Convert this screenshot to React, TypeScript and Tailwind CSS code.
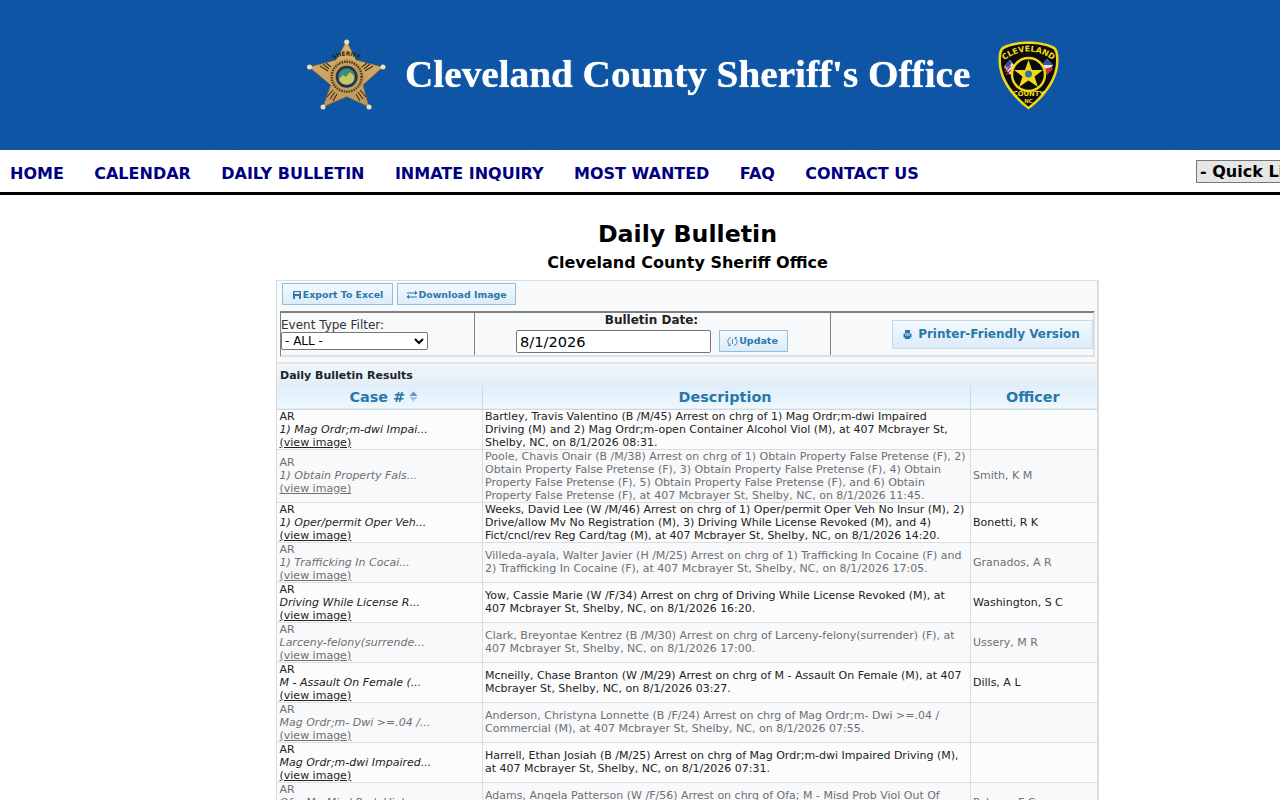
import React from "react";

const F = { fontFamily: '"DejaVu Sans", sans-serif' };

type Row = { c: string; d: React.ReactNode; o: string; alt?: boolean };
const rows: Row[] = [
  { c: "1) Mag Ordr;m-dwi Impai...", d: "Bartley, Travis Valentino (B /M/45) Arrest on chrg of 1) Mag Ordr;m-dwi Impaired Driving (M) and 2) Mag Ordr;m-open Container Alcohol Viol (M), at 407 Mcbrayer St, Shelby, NC, on 8/1/2026 08:31.", o: "" },
  { c: "1) Obtain Property Fals...", d: "Poole, Chavis Onair (B /M/38) Arrest on chrg of 1) Obtain Property False Pretense (F), 2) Obtain Property False Pretense (F), 3) Obtain Property False Pretense (F), 4) Obtain Property False Pretense (F), 5) Obtain Property False Pretense (F), and 6) Obtain Property False Pretense (F), at 407 Mcbrayer St, Shelby, NC, on 8/1/2026 11:45.", o: "Smith, K M", alt: true },
  { c: "1) Oper/permit Oper Veh...", d: "Weeks, David Lee (W /M/46) Arrest on chrg of 1) Oper/permit Oper Veh No Insur (M), 2) Drive/allow Mv No Registration (M), 3) Driving While License Revoked (M), and 4) Fict/cncl/rev Reg Card/tag (M), at 407 Mcbrayer St, Shelby, NC, on 8/1/2026 14:20.", o: "Bonetti, R K" },
  { c: "1) Trafficking In Cocai...", d: "Villeda-ayala, Walter Javier (H /M/25) Arrest on chrg of 1) Trafficking In Cocaine (F) and 2) Trafficking In Cocaine (F), at 407 Mcbrayer St, Shelby, NC, on 8/1/2026 17:05.", o: "Granados, A R", alt: true },
  { c: "Driving While License R...", d: "Yow, Cassie Marie (W /F/34) Arrest on chrg of Driving While License Revoked (M), at 407 Mcbrayer St, Shelby, NC, on 8/1/2026 16:20.", o: "Washington, S C" },
  { c: "Larceny-felony(surrende...", d: "Clark, Breyontae Kentrez (B /M/30) Arrest on chrg of Larceny-felony(surrender) (F), at 407 Mcbrayer St, Shelby, NC, on 8/1/2026 17:00.", o: "Ussery, M R", alt: true },
  { c: "M - Assault On Female (...", d: "Mcneilly, Chase Branton (W /M/29) Arrest on chrg of M - Assault On Female (M), at 407 Mcbrayer St, Shelby, NC, on 8/1/2026 03:27.", o: "Dills, A L" },
  { c: "Mag Ordr;m- Dwi >=.04 /...", d: "Anderson, Christyna Lonnette (B /F/24) Arrest on chrg of Mag Ordr;m- Dwi >=.04 / Commercial (M), at 407 Mcbrayer St, Shelby, NC, on 8/1/2026 07:55.", o: "", alt: true },
  { c: "Mag Ordr;m-dwi Impaired...", d: "Harrell, Ethan Josiah (B /M/25) Arrest on chrg of Mag Ordr;m-dwi Impaired Driving (M), at 407 Mcbrayer St, Shelby, NC, on 8/1/2026 07:31.", o: "" },
  { c: "Ofa; M - Misd Prob Viol...", d: "Adams, Angela Patterson (W /F/56) Arrest on chrg of Ofa; M - Misd Prob Viol Out Of County (M), at 407 Mcbrayer St, Shelby, NC, on 8/1/2026 09:10.", o: "Palmer, F C", alt: true },
];

function Star() {
  return (
    <svg width="80" height="72" viewBox="0 0 80 72" className="shrink-0">
      <defs>
        <linearGradient id="gold" x1="0" y1="0" x2="0" y2="1">
          <stop offset="0" stopColor="#d9b56e" />
          <stop offset="1" stopColor="#c0975a" />
        </linearGradient>
      </defs>
      <polygon
        points="40.700,2 50,21 77,28 57,46 63,68 40.700,57.700 17,68 24.700,46 3,28 30,21"
        fill="url(#gold)"
        stroke="#7a5c30"
        strokeWidth="0.6"
      />
      {[[40.7, 3], [3.5, 28], [77, 28], [17, 68], [63, 68]].map(([x, y], i) => (
        <circle key={i} cx={x} cy={y} r="2.500" fill="#eee2bc" />
      ))}
      <path
        d="M14 27l8 5M17 25l6 5M20 24l5 4M67 27l-8 5M64 25l-6 5M61 24l-5 4M24 60l5-7M27 62l4-7M21 58l6-7M57 60l-5-7M54 62l-4-7M60 58l-6-7"
        stroke="#3a2b14"
        strokeWidth="1.100"
      />
      <circle cx="40.700" cy="37.700" r="18" fill="#c59e5c" />
      <circle cx="40.700" cy="37.700" r="15" fill="none" stroke="#4a3a1c" strokeWidth="2.400" strokeDasharray="1.500 1" />
      <circle cx="40.700" cy="37.700" r="11" fill="#27324e" />
      <circle cx="40.700" cy="37.700" r="8.500" fill="#3d8b7a" />
      <path d="M33 40l4-4 3 2 4-5 4 4v4a8.500 8.500 0 0 1-15 0z" fill="#c8c860" />
      <path id="sh-arc" d="M27 21Q40.700 12 54 21" fill="none" />
      <text fontSize="5.800" fontWeight="700" fill="#2c2010" fontFamily="DejaVu Sans">
        <textPath href="#sh-arc" startOffset="50%" textAnchor="middle">SHERIFF</textPath>
      </text>
    </svg>
  );
}

function Shield() {
  return (
    <svg width="61" height="69" viewBox="0 0 61 69" className="shrink-0">
      <path d="M30.500 .5C42 .5 52 3 57 6C60 9 60.500 13 60.500 20C60.500 40 45 58 30.500 68.500C16 58 .5 40 .5 20C.5 13 1 9 4 6C9 3 19 .5 30.500 .5z" fill="#f2d916" />
      <path d="M30.500 3C41 3 50 5 55 8C57.500 10 58 14 58 20C58 38 44 55 30.500 65.500C17 55 3 38 3 20C3 14 3.500 10 6 8C11 5 20 3 30.500 3z" fill="#0b0b0b" />
      <path id="cl-arc" d="M5 20Q30.500 1 56 20" fill="none" />
      <text fontSize="8" fontWeight="700" fill="#f2d916" fontFamily="DejaVu Sans">
        <textPath href="#cl-arc" startOffset="50%" textAnchor="middle">CLEVELAND</textPath>
      </text>
      <path d="M6 26l6-7 5 6-5 9z" fill="#e2e2ea" />
      <path d="M6.500 28l6-6M7 31l6-6M8 34l5-5" stroke="#c43030" strokeWidth="1.200" />
      <path d="M7 24l4-5 3 3-4 5z" fill="#33509a" />
      <path d="M55 24l-6-6-5 6 5 9z" fill="#e2e2ea" />
      <path d="M44 24l5-6 6 6z" fill="#33509a" />
      <path d="M46 28l8-2 1 2-6 6z" fill="#c83030" />
      <circle cx="30.500" cy="33.500" r="16.500" fill="#0b0b0b" stroke="#f2d916" strokeWidth="2.400" />
      <polygon points="30.500,19 34,29 45,29 36.500,35.500 40,46 30.500,39.500 21,46 24.500,35.500 16,29 27,29" fill="#f2d916" />
      <circle cx="30.500" cy="33" r="3.500" fill="#3a6ea8" />
      <text x="30.500" y="54.500" textAnchor="middle" fontSize="6.800" fontWeight="700" fill="#f2d916" fontFamily="DejaVu Sans">COUNTY</text>
      <text x="30.500" y="62" textAnchor="middle" fontSize="5.500" fontWeight="700" fill="#f2d916" fontFamily="DejaVu Sans">NC</text>
    </svg>
  );
}

function Btn({ icon, children, cls }: { icon: React.ReactNode; children: React.ReactNode; cls: string }) {
  return (
    <button
      style={F}
      className={`flex items-center justify-center bg-gradient-to-b from-[#f4f9fd] to-[#dcecf8] text-[#2779aa] font-bold ${cls}`}
    >
      {icon}
      {children}
    </button>
  );
}

export default function App() {
  return (
    <div className="w-[1280px] h-[800px] overflow-hidden bg-white" style={F}>
      <div className="w-[1375px]">
        <header className="relative h-[150px] bg-[#1161b0] flex items-center justify-center overflow-hidden">
          <svg className="absolute inset-0 opacity-30" width="1375" height="150">
            <filter id="n">
              <feTurbulence type="fractalNoise" baseFrequency="0.8" numOctaves="2" />
              <feColorMatrix type="matrix" values="0 0 0 0 0  0 0 0 0 0  0 0 0 0 0.1  0.8 0 0 0 0" />
            </filter>
            <rect width="1375" height="150" filter="url(#n)" />
          </svg>
          <div className="relative flex items-center pr-[10px]">
            <Star />
            <span
              className="inline-block ml-[35px] mr-[43px] text-white font-bold text-[37px] scale-x-[1.06] whitespace-nowrap [text-shadow:0_0_1px_#ffffff]"
              style={{ fontFamily: '"Liberation Serif", serif' }}
            >
              Cleveland County Sheriff's Office
            </span>
            <Shield />
          </div>
        </header>

        <nav className="relative h-[45px] border-b-[3px] border-black flex items-center pl-[10px] pt-[6px] gap-[30.400px] text-[#000080] font-bold text-[16px]">
          {["HOME", "CALENDAR", "DAILY BULLETIN", "INMATE INQUIRY", "MOST WANTED", "FAQ", "CONTACT US"].map((t) => (
            <a key={t} className="whitespace-nowrap">{t}</a>
          ))}
          <div className="absolute left-[1196px] top-[10px] h-[23px] w-[150px] border border-[#767676] bg-[#e6e6e6] text-black text-[16px] leading-[21px] pl-[3px] whitespace-nowrap">
            - Quick Links -
          </div>
        </nav>

        <main className="w-[823px] mx-auto pt-[25px] text-black">
          <h1 className="text-center text-[23.700px] font-bold leading-[29px]">Daily Bulletin</h1>
          <h2 className="text-center text-[16px] font-bold leading-[19px] mt-[4px]">Cleveland County Sheriff Office</h2>

          <section className="mt-[8px] border border-[#dcdcdc] border-r-2 bg-[#f8f9fb]">
            <div className="flex gap-[4px] pl-[5px] pt-[2px] h-[30px]">
              <Btn
                cls="w-[111px] h-[22px] text-[9.400px] pt-[2px] border border-[#8fc1de]"
                icon={
                  <svg width="10" height="10" viewBox="0 0 10 10" className="mr-[1px]">
                    <rect x="1" y="1" width="8" height="8" rx="1" fill="#2779aa" />
                    <path d="M2.500 2h5v2h-5zM3 6h4v3H3z" fill="#dcecf8" />
                  </svg>
                }
              >
                Export To Excel
              </Btn>
              <Btn
                cls="w-[119px] h-[22px] text-[9.400px] pt-[2px] border border-[#8fc1de]"
                icon={
                  <svg width="12" height="10" viewBox="0 0 12 10">
                    <path d="M11 6.500H3v-2L.5 6.800 3 9V7.500h8zM1 2.500h8v-2l2.500 2.500L9 5V3.500H1z" fill="#2779aa" />
                  </svg>
                }
              >
                Download Image
              </Btn>
            </div>
            <div className="ml-[3px] mr-[2px] h-[46px] flex border-t-2 border-l border-[#808080] border-r-2 border-r-[#e0e0e0] border-b-2 border-b-[#e0e0e0]">
              <div className="w-[194px] border-r border-[#808080] text-[12px] leading-[14px] pt-[5px]">
                <div className="text-[#333]">Event Type Filter:</div>
                <div className="relative w-[147px] h-[18px] border border-[#767676] bg-white rounded-[2px] text-[12px] leading-[16px] pl-[3px] text-black">
                  - ALL -
                  <svg className="absolute right-[3px] top-[5px]" width="10" height="7" viewBox="0 0 10 7">
                    <path d="M1 1l4 4 4-4" stroke="#000" strokeWidth="2" fill="none" />
                  </svg>
                </div>
              </div>
              <div className="w-[356px] border-r border-[#808080]">
                <div className="text-center text-[12px] leading-[14px] font-bold text-[#222] pr-[2px]">Bulletin Date:</div>
                <div className="flex items-start mt-[3px] pl-[41px] gap-[8px]">
                  <div className="w-[195px] h-[23px] border border-[#767676] rounded-[2px] bg-white text-[14.600px] leading-[22px] pl-[3px] text-black">8/1/2026</div>
                  <Btn
                    cls="w-[69px] h-[22px] text-[9.500px] border border-[#8fc1de] pr-[2px]"
                    icon={
                      <svg width="11" height="11" viewBox="0 0 11 11" className="mr-[1px]">
                        <path d="M4 1.500a4 4 0 0 0-1 7.500M7 9.500a4 4 0 0 0 1-7.500M3 7.500V9.500H1M8 3.500V1.500h2" stroke="#2779aa" strokeWidth="0.800" fill="none" />
                        <path d="M5.500 3v5" stroke="#2779aa" strokeWidth="0.800" />
                      </svg>
                    }
                  >
                    Update
                  </Btn>
                </div>
              </div>
              <div className="flex-1 flex items-start justify-end pt-[7px]">
                <Btn
                  cls="w-[201px] h-[29px] text-[12px] border border-[#c5dbec] pb-[2px] pr-[3px]"
                  icon={
                    <svg width="11" height="11" viewBox="0 0 11 11" className="mr-[5px] mt-[2px]">
                      <path d="M3 1h5v3H3zM1.500 4.500h8v4h-8zM3 8.500h5v1.500H3z" fill="#2779aa" />
                      <path d="M3 6h5" stroke="#dcecf8" />
                    </svg>
                  }
                >
                  Printer-Friendly Version
                </Btn>
              </div>
            </div>

            <div className="mt-[5px] border-t-2 border-[#e3e3e3] h-[24px] bg-gradient-to-b from-[#f0f6fb] to-[#e0eef9] text-[11px] font-bold text-[#222] pl-[3px] leading-[23px]">
              Daily Bulletin Results
            </div>
            <table className="w-full border-collapse table-fixed text-[11px] leading-[13px]">
              <colgroup>
                <col className="w-[205px]" />
                <col className="w-[488px]" />
                <col />
              </colgroup>
              <thead>
                <tr className="h-[23px] bg-gradient-to-b from-[#e0eef9] to-[#f0f7fc] text-[#2779aa] text-[14.400px] font-bold border-b border-[#c5dbec]">
                  <th className="border-r border-[#c5dbec] font-bold pl-[9px]">
                    Case #
                    <svg className="inline ml-[4px] align-[0px]" width="9" height="11" viewBox="0 0 9 11">
                      <path d="M4.500 .5l4 4.500h-8z" fill="#5f97c0" />
                      <path d="M4.500 10.500l4-4.500h-8z" fill="#a4c6de" />
                    </svg>
                  </th>
                  <th className="border-r border-[#c5dbec] font-bold pr-[2px]">Description</th>
                  <th className="font-bold pr-[2px]">Officer</th>
                </tr>
              </thead>
              <tbody>
                {rows.map((r, i) => (
                  <tr key={i} className={`border-b border-[#ddd] ${r.alt ? "text-[#6f6f6f] bg-[#f8f9fb]" : "text-[#222] bg-[#fcfcfd]"}`}>
                    <td className="pl-[2.500px] border-r border-[#ddd] align-middle">
                      <div>AR</div>
                      <div className="italic">{r.c}</div>
                      <div className="underline">(view image)</div>
                    </td>
                    <td className="pl-[2.500px] pr-[2px] border-r border-[#ddd] align-middle">{r.d}</td>
                    <td className="pl-[2.500px] align-middle">{r.o}</td>
                  </tr>
                ))}
              </tbody>
            </table>
          </section>
        </main>
      </div>
    </div>
  );
}
